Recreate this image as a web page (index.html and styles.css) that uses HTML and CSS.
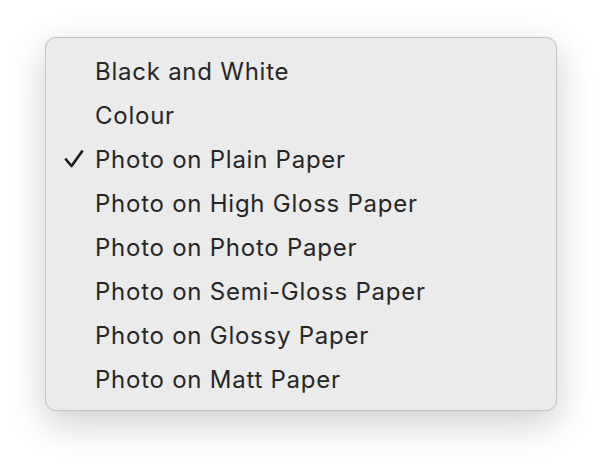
FILE: index.html
```html
<!DOCTYPE html>
<html>
<head>
<meta charset="utf-8">
<link rel="stylesheet" href="styles.css">
</head>
<body>
<div class="menu">
  <div class="item"><span class="check"></span><span class="label">Black and White</span></div>
  <div class="item"><span class="check"></span><span class="label">Colour</span></div>
  <div class="item"><span class="check"><svg width="20" height="18" viewBox="0 0 20 18"><path d="M2 9.5 L7.5 16 L18 1.5" fill="none" stroke="#1e1e1e" stroke-width="2.7" stroke-linecap="round" stroke-linejoin="round"/></svg></span><span class="label">Photo on Plain Paper</span></div>
  <div class="item"><span class="check"></span><span class="label">Photo on High Gloss Paper</span></div>
  <div class="item"><span class="check"></span><span class="label">Photo on Photo Paper</span></div>
  <div class="item"><span class="check"></span><span class="label">Photo on Semi-Gloss Paper</span></div>
  <div class="item"><span class="check"></span><span class="label">Photo on Glossy Paper</span></div>
  <div class="item"><span class="check"></span><span class="label">Photo on Matt Paper</span></div>
</div>
</body>
</html>
```
FILE: styles.css
```css
html, body {
  margin: 0;
  padding: 0;
  background: #ffffff;
  min-height: 464px;
}
body {
  box-sizing: border-box;
  padding: 37px 0 0 45px;
  font-family: Inter, "Noto Sans", sans-serif;
}
.menu {
  box-sizing: border-box;
  width: 512px;
  height: 374px;
  padding: 11px 0 10px 0;
  background: #ebebeb;
  border: 1px solid #c4c4c4;
  border-radius: 11px;
  box-shadow: 0 12px 38px rgba(0,0,0,0.2), 0 0 1px rgba(0,0,0,0.12);
}
.item {
  display: flex;
  align-items: center;
  height: 44px;
}
.check {
  width: 49px;
  display: flex;
  justify-content: flex-end;
  padding-right: 11px;
  box-sizing: border-box;
}
.check svg { display: block; }
.label {
  font-size: 24px;
  color: #262626;
  letter-spacing: 0.75px;
}
```
